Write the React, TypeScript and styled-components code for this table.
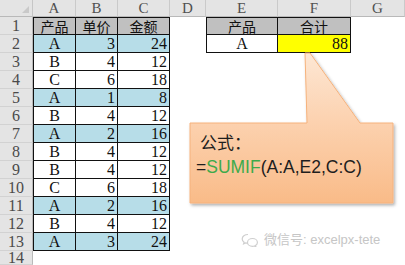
import React from 'react'
import styled, { createGlobalStyle } from 'styled-components'

const GlobalStyle = createGlobalStyle`
  html, body {
    margin: 0;
    padding: 0;
    background: #ffffff;
  }
  * {
    box-sizing: border-box;
  }
`

type Fill = 'none' | 'head' | 'blue' | 'white' | 'yellow'

interface CellData {
  text?: string
  fill?: Fill
  align?: 'left' | 'center' | 'right'
  cjk?: boolean
  boxed?: boolean
  left?: boolean
  top?: boolean
}

const fills: Record<Fill, string> = {
  none: '#ffffff',
  head: '#c0c0c0',
  blue: '#b7dde8',
  white: '#ffffff',
  yellow: '#ffff00',
}

const COLS = ['A', 'B', 'C', 'D', 'E', 'F', 'G']

const Page = styled.div`
  position: relative;
  width: 405px;
  height: 265px;
  overflow: hidden;
  background: #fff;
`

const Sheet = styled.div`
  display: grid;
  grid-template-columns: 33px 43px 42px 52px 36px 72px 73px 54px;
  grid-template-rows: 17px repeat(13, 18px) 14px;
`

const Corner = styled.div`
  position: relative;
  background: #e4e4e4;
  border-right: 1px solid #c6c6c6;
  border-bottom: 1px solid #b9b9b9;

  &::after {
    content: '';
    position: absolute;
    right: 3px;
    bottom: 3px;
    border-style: solid;
    border-width: 0 0 7px 7px;
    border-color: transparent transparent #c9c9c9 transparent;
  }
`

const ColHead = styled.div`
  display: flex;
  align-items: center;
  justify-content: center;
  background: #e4e4e4;
  border-right: 1px solid #cacaca;
  border-bottom: 1px solid #b9b9b9;
  color: #505050;
  font-family: 'Liberation Serif', serif;
  font-size: 15px;
  line-height: 1;
`

const RowHead = styled.div`
  display: flex;
  align-items: center;
  justify-content: center;
  background: #e4e4e4;
  border-right: 1px solid #b9b9b9;
  border-bottom: 1px solid #d2d2d2;
  color: #4a4a4a;
  font-family: 'Liberation Serif', serif;
  font-size: 16px;
  line-height: 1;
`

const Cell = styled.div<{
  $fill: Fill
  $align: string
  $cjk: boolean
  $boxed: boolean
  $left: boolean
  $top: boolean
}>`
  display: flex;
  align-items: center;
  justify-content: ${({ $align }) =>
    $align === 'left' ? 'flex-start' : $align === 'right' ? 'flex-end' : 'center'};
  padding: 0 2px;
  background: ${({ $fill }) => fills[$fill]};
  border-right: ${({ $boxed }) => ($boxed ? '1px solid #111' : 'none')};
  border-bottom: ${({ $boxed }) => ($boxed ? '1px solid #111' : 'none')};
  border-left: ${({ $left }) => ($left ? '1px solid #111' : 'none')};
  border-top: ${({ $top }) => ($top ? '1px solid #111' : 'none')};
  color: #111;
  font-family: ${({ $cjk }) =>
    $cjk ? "'Noto Sans CJK SC', sans-serif" : "'Liberation Serif', 'Noto Sans CJK SC', serif"};
  font-size: ${({ $cjk }) => ($cjk ? '14px' : '16px')};
  line-height: 1;
  white-space: nowrap;
`

const Callout = styled.div`
  position: absolute;
  left: 186px;
  top: 48px;
  width: 214px;
  height: 164px;
`

const CalloutShape = styled.svg`
  position: absolute;
  left: 0;
  top: 0;
`

const CalloutBody = styled.div`
  position: absolute;
  left: 4px;
  top: 75px;
  width: 203px;
  height: 80px;
  display: flex;
  flex-direction: column;
  gap: 4px;
  padding: 8px 0 0 10px;
  color: #1e1e1e;
`

const Label = styled.div`
  font-family: 'Noto Sans CJK SC', sans-serif;
  font-size: 17px;
  line-height: 21px;
`

const Formula = styled.div`
  font-family: 'Liberation Sans', Arial, sans-serif;
  font-size: 17.5px;
  line-height: 22px;
  margin-left: -4px;
`

const Fn = styled.span`
  color: #3daa4b;
`

const Watermark = styled.div`
  position: absolute;
  left: 241px;
  top: 232px;
  display: flex;
  align-items: center;
  gap: 5px;
  color: #c6c6c6;
  font-family: 'Liberation Sans', 'Noto Sans CJK SC', sans-serif;
  font-size: 13px;
  line-height: 16px;
`

const rows: CellData[][] = [
  [
    { text: '产品', fill: 'head', cjk: true, boxed: true, left: true, top: true },
    { text: '单价', fill: 'head', cjk: true, boxed: true, top: true },
    { text: '金额', fill: 'head', cjk: true, boxed: true, top: true },
    {},
    { text: '产品', fill: 'head', cjk: true, boxed: true, left: true, top: true },
    { text: '合计', fill: 'head', cjk: true, boxed: true, top: true },
    {},
  ],
]

const data: [string, string, string][] = [
  ['A', '3', '24'],
  ['B', '4', '12'],
  ['C', '6', '18'],
  ['A', '1', '8'],
  ['B', '4', '12'],
  ['A', '2', '16'],
  ['B', '4', '12'],
  ['B', '4', '12'],
  ['C', '6', '18'],
  ['A', '2', '16'],
  ['B', '4', '12'],
  ['A', '3', '24'],
]

data.forEach(([p, price, amount], i) => {
  const fill: Fill = p === 'A' ? 'blue' : 'white'
  const row: CellData[] = [
    { text: p, fill, boxed: true, left: true },
    { text: price, fill, boxed: true, align: 'right' },
    { text: amount, fill, boxed: true, align: 'right' },
    {},
  ]
  if (i === 0) {
    row.push({ text: 'A', fill: 'white', boxed: true, left: true })
    row.push({ text: '88', fill: 'yellow', boxed: true, align: 'right' })
  } else {
    row.push({}, {})
  }
  row.push({})
  rows.push(row)
})

rows.push([{}, {}, {}, {}, {}, {}, {}])

const WeChatIcon = () => (
  <svg width="18" height="14" viewBox="0 0 18 14" fill="none" stroke="#cfcfcf" strokeWidth="1.2">
    <path d="M7 1.5c-3.3 0-5.8 2-5.8 4.4 0 1.3.7 2.5 1.9 3.3l-.5 1.7 2-1c.7.2 1.5.3 2.4.3" />
    <path d="M11.5 5.5c-2.9 0-5 1.8-5 3.9s2.1 3.9 5 3.9c.6 0 1.2-.1 1.8-.3l1.6.9-.4-1.4c1-.7 1.9-1.8 1.9-3.1 0-2.1-2.1-3.9-4.9-3.9z" />
  </svg>
)

const App: React.FC = () => (
  <Page>
    <GlobalStyle />
    <Sheet>
      <Corner />
      {COLS.map((c) => (
        <ColHead key={c}>{c}</ColHead>
      ))}
      {rows.map((row, r) => (
        <React.Fragment key={r}>
          <RowHead>{r + 1}</RowHead>
          {row.map((cell, c) => (
            <Cell
              key={c}
              $fill={cell.fill ?? 'none'}
              $align={cell.align ?? 'center'}
              $cjk={!!cell.cjk}
              $boxed={!!cell.boxed}
              $left={!!cell.left}
              $top={!!cell.top}
            >
              {cell.text}
            </Cell>
          ))}
        </React.Fragment>
      ))}
    </Sheet>

    <Callout>
      <CalloutShape width="214" height="164" viewBox="0 0 214 164">
        <defs>
          <linearGradient id="peach" x1="0" y1="0" x2="0" y2="1">
            <stop offset="0" stopColor="#fde7d4" />
            <stop offset="0.45" stopColor="#fcd2b0" />
            <stop offset="1" stopColor="#f9bb88" />
          </linearGradient>
          <filter id="drop" x="-10%" y="-10%" width="120%" height="125%">
            <feDropShadow dx="1.5" dy="2" stdDeviation="1.5" floodColor="#000" floodOpacity="0.3" />
          </filter>
        </defs>
        <path
          d="M4 75 H121 L119 5 H124 L174 75 H207 V155 H4 Z"
          fill="url(#peach)"
          stroke="#f6b27c"
          strokeWidth="1"
          filter="url(#drop)"
        />
      </CalloutShape>
      <CalloutBody>
        <Label>公式：</Label>
        <Formula>
          =<Fn>SUMIF</Fn>(A:A,E2,C:C)
        </Formula>
      </CalloutBody>
    </Callout>

    <Watermark>
      <WeChatIcon />
      <span>微信号: excelpx-tete</span>
    </Watermark>
  </Page>
)

export default App
